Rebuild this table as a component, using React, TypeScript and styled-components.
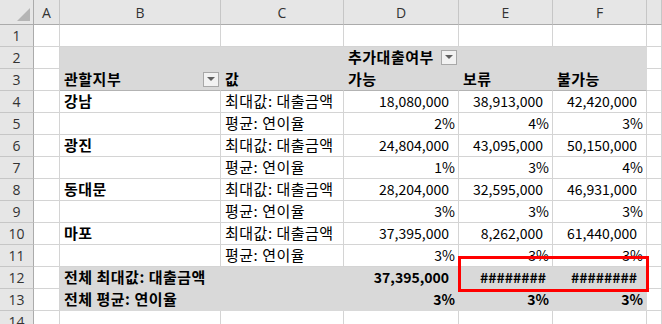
import styled, { createGlobalStyle } from 'styled-components';

const GlobalStyle = createGlobalStyle`
    html, body {
        margin: 0;
        padding: 0;
        background: #ffffff;
        overflow: hidden;
    }
`;

const GRID = '#d4d4d4';
const PIVOT = '#d9d9d9';

const Sheet = styled.div`
    position: relative;
    display: grid;
    grid-template-columns: 34px 26px 161px 123px 115px 94px 94px 1fr;
    grid-auto-rows: 22px;
    grid-template-rows: 25px;
    width: 662px;
    height: 324px;
    overflow: hidden;
    font-family: "Noto Sans CJK KR", "Noto Sans", sans-serif;
    font-size: 14px;
    color: #000000;
`;

const Corner = styled.div`
    position: relative;
    background: #e6e6e6;
    border-right: 1px solid #ababab;
    border-bottom: 1px solid #ababab;
    box-sizing: border-box;

    &::after {
        content: '';
        position: absolute;
        right: 3px;
        bottom: 3px;
        width: 0;
        height: 0;
        border-left: 13px solid transparent;
        border-bottom: 13px solid #b5b5b5;
    }
`;

const ColHead = styled.div`
    display: flex;
    align-items: center;
    justify-content: center;
    background: #e6e6e6;
    border-right: 1px solid #c6c6c6;
    border-bottom: 1px solid #ababab;
    box-sizing: border-box;
    font-family: "Open Sans", "Noto Sans", sans-serif;
    font-size: 14px;
    color: #333333;
`;

const RowHead = styled.div`
    display: flex;
    align-items: center;
    justify-content: center;
    background: #e6e6e6;
    border-right: 1px solid #ababab;
    border-bottom: 1px solid #c6c6c6;
    box-sizing: border-box;
    font-family: "Open Sans", "Noto Sans", sans-serif;
    font-size: 14px;
    color: #333333;
`;

const Cell = styled.div<{ $pivot?: boolean; $right?: boolean; $bold?: boolean; $pad?: number; $line?: string }>`
    display: flex;
    align-items: center;
    justify-content: ${p => (p.$right ? 'flex-end' : 'space-between')};
    gap: 4px;
    padding: 0 ${p => (p.$right ? p.$pad ?? 3 : 1)}px 1px ${p => (p.$right ? 2 : 4)}px;
    box-sizing: border-box;
    background: ${p => (p.$pivot ? PIVOT : '#ffffff')};
    border-right: 1px solid ${p => (p.$pivot ? PIVOT : GRID)};
    border-bottom: 1px solid ${p => p.$line ?? (p.$pivot ? PIVOT : GRID)};
    font-weight: ${p => (p.$bold ? 700 : 400)};
    white-space: nowrap;
    overflow: hidden;
    line-height: 20px;
`;

const Label = styled.span<{ $text?: boolean }>`
    flex: 0 0 auto;
    font-size: ${p => (p.$text ? 15 : 14)}px;
    letter-spacing: ${p => (p.$text ? 0.5 : 0)}px;
`;

const DropButton = styled.span`
    flex: 0 0 auto;
    display: flex;
    align-items: center;
    justify-content: center;
    width: 16px;
    height: 15px;
    box-sizing: border-box;
    background: #f2f2f2;
    border: 1px solid #a8a8a8;

    &::after {
        content: '';
        width: 0;
        height: 0;
        border-left: 4px solid transparent;
        border-right: 4px solid transparent;
        border-top: 4px solid #606060;
    }
`;

const Highlight = styled.div`
    position: absolute;
    left: 458px;
    top: 256px;
    width: 191px;
    height: 36px;
    box-sizing: border-box;
    border: 3px solid #ff0000;
    pointer-events: none;
`;

type CellDef = {
    text?: string;
    right?: boolean;
    bold?: boolean;
    pad?: number;
    drop?: boolean;
};

type RowDef = {
    pivot?: boolean;
    line?: string;
    cells: CellDef[];
};

const num = (text: string, bold = false): CellDef => ({ text, right: true, pad: 9, bold });
const pct = (text: string, bold = false): CellDef => ({ text, right: true, pad: 3, bold });

const rows: RowDef[] = [
    { cells: [{}, {}, {}, {}, {}] },
    { pivot: true, cells: [{}, {}, { text: '추가대출여부', bold: true, drop: true }, {}, {}] },
    {
        pivot: true,
        line: '#b3b3b3',
        cells: [
            { text: '관할지부', bold: true, drop: true },
            { text: '값', bold: true },
            { text: '가능', bold: true },
            { text: '보류', bold: true },
            { text: '불가능', bold: true },
        ],
    },
    { cells: [{ text: '강남', bold: true }, { text: '최대값: 대출금액' }, num('18,080,000'), num('38,913,000'), num('42,420,000')] },
    { cells: [{}, { text: '평균: 연이율' }, pct('2%'), pct('4%'), pct('3%')] },
    { cells: [{ text: '광진', bold: true }, { text: '최대값: 대출금액' }, num('24,804,000'), num('43,095,000'), num('50,150,000')] },
    { cells: [{}, { text: '평균: 연이율' }, pct('1%'), pct('3%'), pct('4%')] },
    { cells: [{ text: '동대문', bold: true }, { text: '최대값: 대출금액' }, num('28,204,000'), num('32,595,000'), num('46,931,000')] },
    { cells: [{}, { text: '평균: 연이율' }, pct('3%'), pct('3%'), pct('3%')] },
    { cells: [{ text: '마포', bold: true }, { text: '최대값: 대출금액' }, num('37,395,000'), num('8,262,000'), num('61,440,000')] },
    { cells: [{}, { text: '평균: 연이율' }, pct('3%'), pct('3%'), pct('3%')] },
    {
        pivot: true,
        cells: [
            { text: '전체 최대값: 대출금액', bold: true },
            {},
            num('37,395,000', true),
            { text: '########', right: true, pad: 6, bold: true },
            { text: '########', right: true, pad: 9, bold: true },
        ],
    },
    {
        pivot: true,
        cells: [{ text: '전체 평균: 연이율', bold: true }, {}, pct('3%', true), pct('3%', true), pct('3%', true)],
    },
    { cells: [{}, {}, {}, {}, {}] },
];

const columns = ['A', 'B', 'C', 'D', 'E', 'F', ''];

export default function App() {
    return (
        <>
            <GlobalStyle />
            <Sheet>
                <Corner />
                {columns.map((c, i) => (
                    <ColHead key={'h' + i}>{c}</ColHead>
                ))}

                {rows.map((row, r) => (
                    <>
                        <RowHead key={'r' + r}>{r + 1}</RowHead>
                        <Cell key={'a' + r} />
                        {row.cells.map((cell, c) => (
                            <Cell
                                key={r + '-' + c}
                                $pivot={row.pivot}
                                $right={cell.right}
                                $bold={cell.bold}
                                $pad={cell.pad}
                                $line={row.line}
                            >
                                {cell.text && <Label $text={!cell.right}>{cell.text}</Label>}
                                {cell.drop && <DropButton />}
                            </Cell>
                        ))}
                        <Cell key={'g' + r} />
                    </>
                ))}
                <Highlight />
            </Sheet>
        </>
    );
}
